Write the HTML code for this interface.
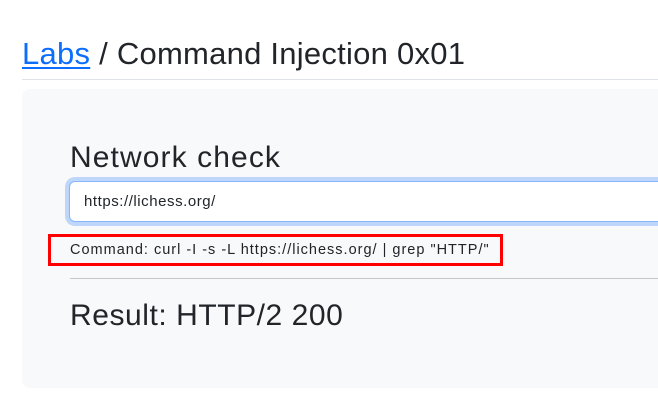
<!DOCTYPE html>
<html><head><meta charset="utf-8"><style>
*{margin:0;padding:0;box-sizing:border-box}
body{width:658px;height:406px;overflow:hidden;background:#fff;font-family:"Liberation Sans",sans-serif;color:#212529;position:relative}
.a{position:absolute;white-space:nowrap}
</style></head><body>
<div class="a" style="left:22px;top:34px;font-size:31px;line-height:40px;letter-spacing:0.25px"><span style="color:#0d6efd;text-decoration:underline;text-decoration-thickness:2px;text-underline-offset:3px">Labs</span> / Command Injection 0x01</div>
<div class="a" style="left:22px;top:79px;width:640px;height:1px;background:#dee2e6"></div>
<div class="a" style="left:22px;top:89px;width:660px;height:299px;background:#f8f9fa;border-radius:8px"></div>
<div class="a" style="left:70px;top:139px;font-size:30px;line-height:38px;letter-spacing:1.1px">Network check</div>
<div class="a" style="left:69px;top:181px;width:620px;height:41px;background:#fff;border:1px solid #86b7fe;border-radius:6px;box-shadow:0 0 0 4px rgba(13,110,253,.25)"></div>
<div class="a" style="left:84px;top:192px;font-size:15px;line-height:20px;letter-spacing:0.55px">https://lichess.org/</div>
<div class="a" style="left:48px;top:234px;width:455px;height:32px;border:3px solid #ff0000"></div>
<div class="a" style="left:70px;top:240px;font-size:14.5px;line-height:20px;letter-spacing:1px">Command: curl -I -s -L https://lichess.org/ | grep "HTTP/"</div>
<div class="a" style="left:70px;top:278px;width:600px;height:1px;background:#c4c6c8"></div>
<div class="a" style="left:70px;top:297px;font-size:30px;line-height:38px;letter-spacing:0.55px">Result: HTTP/2 200</div>
</body></html>
